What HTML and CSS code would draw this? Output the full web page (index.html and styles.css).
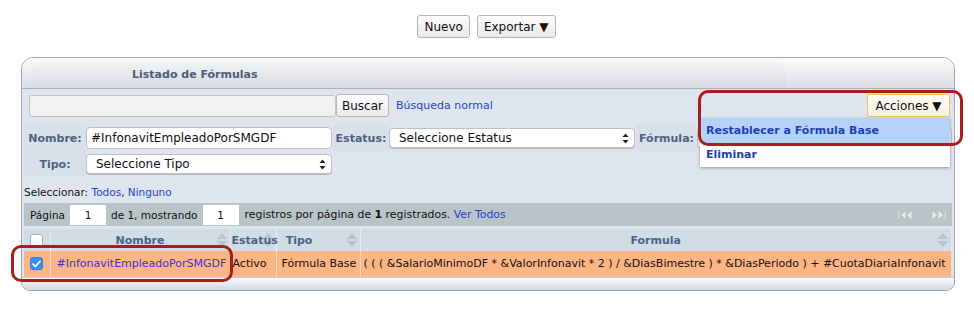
FILE: index.html
```html
<!DOCTYPE html>
<html>
<head>
<meta charset="utf-8">
<title>Listado de Fórmulas</title>
<link rel="stylesheet" href="styles.css">
</head>
<body>
<div class="topbar">
  <button class="btn">Nuevo</button>
  <button class="btn">Exportar ▼</button>
</div>

<div class="panel">
  <div class="panel-head"><div class="tab">Listado de Fórmulas</div></div>
  <div class="panel-body">
    <div class="searchrow">
      <div class="search"></div>
      <button class="btn-sm">Buscar</button>
      <a class="link normal">Búsqueda normal</a>
      <div class="actions">
        <button class="acc-btn">Acciones ▼</button>
        <div class="menu">
          <div class="menu-item active">Restablecer a Fórmula Base</div>
          <div class="menu-item">Eliminar</div>
        </div>
      </div>
    </div>

    <div class="filters">
      <div class="lbl">Nombre:</div>
      <div class="cell"><div class="field">#InfonavitEmpleadoPorSMGDF</div></div>
      <div class="lbl">Estatus:</div>
      <div class="cell"><div class="field select"><span>Seleccione Estatus</span><svg class="updown" width="7" height="11" viewBox="0 0 7 11"><path d="M3.5 0.5 L6.5 4 H0.5 Z M3.5 10.5 L6.5 7 H0.5 Z" fill="#222"/></svg></div></div>
      <div class="lbl">Fórmula:</div>
      <div class="cell"><div class="field wide"></div></div>
      <div class="lbl">Tipo:</div>
      <div class="cell"><div class="field select"><span>Seleccione Tipo</span><svg class="updown" width="7" height="11" viewBox="0 0 7 11"><path d="M3.5 0.5 L6.5 4 H0.5 Z M3.5 10.5 L6.5 7 H0.5 Z" fill="#222"/></svg></div></div>
    </div>

    <div class="selectrow">Seleccionar: <a class="link">Todos</a>, <a class="link">Ninguno</a></div>

    <div class="pager">
      <span>Página</span>
      <div class="pbox">1</div>
      <span>de 1, mostrando</span>
      <div class="pbox">1</div>
      <span class="ptail">registros por página de <b>1</b> registrados. <a class="link">Ver Todos</a></span>
      <div class="pnav">
        <svg width="18" height="12" viewBox="0 0 18 12"><rect x="1" y="1" width="1.6" height="10" fill="#e6eaec" stroke="#a9b3b7" stroke-width="0.5"/><path d="M9 1 L3.5 6 L9 11 Z M15 1 L9.5 6 L15 11 Z" fill="#e6eaec" stroke="#a9b3b7" stroke-width="0.6"/></svg>
        <svg width="18" height="12" viewBox="0 0 18 12"><path d="M3 1 L8.5 6 L3 11 Z M9 1 L14.5 6 L9 11 Z" fill="#e6eaec" stroke="#a9b3b7" stroke-width="0.6"/><rect x="15.4" y="1" width="1.6" height="10" fill="#e6eaec" stroke="#a9b3b7" stroke-width="0.5"/></svg>
      </div>
    </div>

    <table class="grid">
      <thead>
        <tr>
          <th class="c-chk"><span class="chk"></span></th>
          <th class="c-nom"><span class="hd">Nombre</span><svg class="sort" width="12" height="16" viewBox="0 0 12 16"><path d="M6 1 L11.5 7 H0.5 Z" fill="#bcc4cb"/><path d="M6 15 L11.5 9 H0.5 Z" fill="#bcc4cb"/></svg></th>
          <th class="c-est"><span class="hd">Estatus</span><svg class="sort" width="12" height="16" viewBox="0 0 12 16"><path d="M6 1 L11.5 7 H0.5 Z" fill="#bcc4cb"/><path d="M6 15 L11.5 9 H0.5 Z" fill="#bcc4cb"/></svg></th>
          <th class="c-tip"><span class="hd">Tipo</span><svg class="sort" width="12" height="16" viewBox="0 0 12 16"><path d="M6 1 L11.5 7 H0.5 Z" fill="#bcc4cb"/><path d="M6 15 L11.5 9 H0.5 Z" fill="#bcc4cb"/></svg></th>
          <th class="c-for"><span class="hd">Formula</span><svg class="sort" width="12" height="16" viewBox="0 0 12 16"><path d="M6 1 L11.5 7 H0.5 Z" fill="#bcc4cb"/><path d="M6 15 L11.5 9 H0.5 Z" fill="#bcc4cb"/></svg></th>
        </tr>
      </thead>
      <tbody>
        <tr class="sel">
          <td class="c-chk"><span class="chk on"><svg width="9" height="8" viewBox="0 0 9 8"><path d="M1 4.2 L3.4 6.5 L8 1.2" fill="none" stroke="#fff" stroke-width="1.7" stroke-linecap="round" stroke-linejoin="round"/></svg></span></td>
          <td class="c-nom"><a class="link name">#InfonavitEmpleadoPorSMGDF</a></td>
          <td class="c-est">Activo</td>
          <td class="c-tip">Fórmula Base</td>
          <td class="c-for">( ( ( &amp;SalarioMinimoDF * &amp;ValorInfonavit * 2 ) / &amp;DiasBimestre ) * &amp;DiasPeriodo ) + #CuotaDiariaInfonavit</td>
        </tr>
      </tbody>
    </table>
  </div>
  <div class="panel-foot"></div>
</div>

<div class="mark mark-actions"></div>
<div class="mark mark-row"></div>
</body>
</html>
```

FILE: styles.css
```css
* { box-sizing: border-box; }
html, body { margin: 0; padding: 0; background: #fff; }
body {
  font-family: "DejaVu Sans", Verdana, sans-serif;
  font-size: 11px;
  color: #111;
  position: relative;
  width: 974px;
  height: 311px;
  overflow: hidden;
}

.topbar {
  display: flex;
  justify-content: center;
  gap: 7px;
  padding-top: 15px;
  padding-right: 1px;
  height: 57px;
}
.btn {
  font-family: "DejaVu Sans", Verdana, sans-serif;
  font-size: 12px;
  height: 23px;
  padding: 0 6px;
  border: 1px solid #b5b5b5;
  border-radius: 3px;
  background: linear-gradient(#fdfdfd, #e9e9e9);
  color: #111;
}

.panel {
  margin-left: 21px;
  width: 934px;
  border: 1px solid #9ca5ad;
  border-radius: 12px 12px 9px 9px;
  background: #dfe5ee;
  overflow: hidden;
  position: relative;
}
.panel-head {
  height: 31px;
  padding: 4px 0 0 9px;
  background: linear-gradient(#fbfbfb, #dadee2);
  border-bottom: 1px solid #a9b1b9;
}
.tab {
  width: 755px;
  height: 26px;
  border-radius: 11px 11px 0 0;
  background: linear-gradient(#f2f3f4, #d6dbe0);
  padding-left: 101px;
  padding-top: 2px;
  line-height: 22px;
  font-weight: bold;
  color: #4b5e7c;
}

.panel-body { padding: 0 2px; }

.searchrow {
  display: flex;
  align-items: center;
  height: 28px;
  padding: 5px 2px 0 5px;
  position: relative;
}
.search {
  width: 307px;
  height: 22px;
  background: #f1f1f1;
  border: 1px solid #c3c3c3;
  border-radius: 3px;
}
.btn-sm {
  font-family: "DejaVu Sans", Verdana, sans-serif;
  font-size: 12px;
  height: 23px;
  width: 53px;
  padding: 0;
  border: 1px solid #b8b8b8;
  border-radius: 3px;
  background: linear-gradient(#fdfdfd, #ebebeb);
  color: #111;
}
.link { color: #2a3fc8; text-decoration: none; }
.normal { margin-left: 7px; }

.actions {
  margin-left: auto;
  position: relative;
  z-index: 5;
}
.acc-btn {
  font-family: "DejaVu Sans", Verdana, sans-serif;
  font-size: 12px;
  height: 23px;
  width: 83px;
  padding: 0;
  border: 1px solid #f0c05a;
  border-radius: 2px;
  background: linear-gradient(#fffdf6, #f3efe4);
  color: #111;
  display: block;
}
.menu {
  position: absolute;
  top: 24px;
  right: 0;
  width: 250px;
  background: #fff;
  box-shadow: 0 1px 3px rgba(0,0,0,0.35);
}
.menu-item {
  height: 24px;
  line-height: 24px;
  padding-left: 6px;
  font-weight: bold;
  color: #1f3fb8;
}
.menu-item.active { background: #b5d3f8; height: 25px; line-height: 25px; }

.filters {
  display: grid;
  grid-template-columns: 62px 247px 56px 247px 61px 1fr;
  grid-template-rows: 26px 26px;
  margin-top: 8px;
}
.lbl {
  display: flex;
  align-items: center;
  justify-content: center;
  font-weight: bold;
  color: #4c6284;
  background: #d9e0e9;
}
.cell { display: flex; align-items: center; }
.field {
  width: 246px;
  height: 22px;
  background: #fff;
  border: 1px solid #c0c0c0;
  border-radius: 4px;
  font-size: 12px;
  line-height: 20px;
  padding-left: 4px;
  color: #111;
}
.field.wide { width: 100%; }
.select {
  height: 20px;
  line-height: 18px;
  padding-left: 9px;
  display: flex;
  align-items: center;
  justify-content: space-between;
  padding-right: 5px;
  box-shadow: 0 1px 0 #b7bcc2;
}

.selectrow {
  height: 16px;
  margin-top: 7px;
  line-height: 16px;
  font-size: 10.5px;
}

.pager {
  margin-top: 3px;
  height: 23px;
  background: #b8c4c8;
  display: flex;
  align-items: center;
  padding-left: 6px;
  font-size: 10.5px;
}
.pager > span { margin-right: 5px; }
.pager .ptail { font-size: 10.9px; margin-left: 1px; }
.pbox {
  width: 36px;
  height: 20px;
  background: #fff;
  text-align: center;
  line-height: 20px;
  margin-right: 5px;
}
.pnav {
  margin-left: auto;
  display: flex;
  gap: 14px;
  padding-right: 5px;
}

.grid {
  width: 100%;
  border-collapse: collapse;
  margin-top: 3px;
  table-layout: fixed;
}
.grid th {
  height: 22px;
  background: #d2dce4;
  color: #4a6588;
  font-weight: bold;
  position: relative;
  padding: 0;
  border-right: 1px solid #e4eaef;
  overflow: visible;
  white-space: nowrap;
}
.grid th .hd { display: block; text-align: center; position: relative; z-index: 2; }
.grid th .sort { position: absolute; right: 2px; top: 3px; z-index: 1; }
.c-chk { width: 26px; }
.c-nom { width: 180px; }
.c-est { width: 46px; }
.c-tip { width: 84px; }
.grid th.c-est .hd { text-align: left; padding-left: 1px; }
.grid th.c-tip .hd { padding-right: 38px; }
.grid td {
  height: 25px;
  background: #ffb583;
  padding: 0 0 0 3px;
  border-right: 1px solid #f2ddc9;
  border-bottom: 1px solid #f0c9a8;
  white-space: nowrap;
  overflow: hidden;
  color: #111;
}
.grid td.c-nom { padding-left: 6px; }
.grid td.c-est { padding-left: 2px; }
.grid td.c-tip { padding-left: 5px; }
.grid td.c-for { padding-left: 3px; }
.name { color: #3a33d6; font-size: 11px; }
.grid td.c-chk, .grid th.c-chk { padding: 0; text-align: center; }
.chk {
  display: inline-flex;
  align-items: center;
  justify-content: center;
  width: 13px;
  height: 13px;
  border: 1px solid #b0b0b0;
  border-radius: 3px;
  background: #fff;
  vertical-align: middle;
}
.chk.on { background: #3d8ef5; border-color: #2f7de6; }

.panel-foot {
  height: 13px;
  background: linear-gradient(#fafbfc, #d3d9df);
  border-top: 1px solid #c3cbd3;
}

.mark {
  position: absolute;
  border: 3px solid #a4201f;
  border-radius: 10px;
  pointer-events: none;
  z-index: 10;
}
.mark-actions { left: 698px; top: 90px; width: 265px; height: 56px; }
.mark-row { left: 11px; top: 245px; width: 222px; height: 37px; }
```
